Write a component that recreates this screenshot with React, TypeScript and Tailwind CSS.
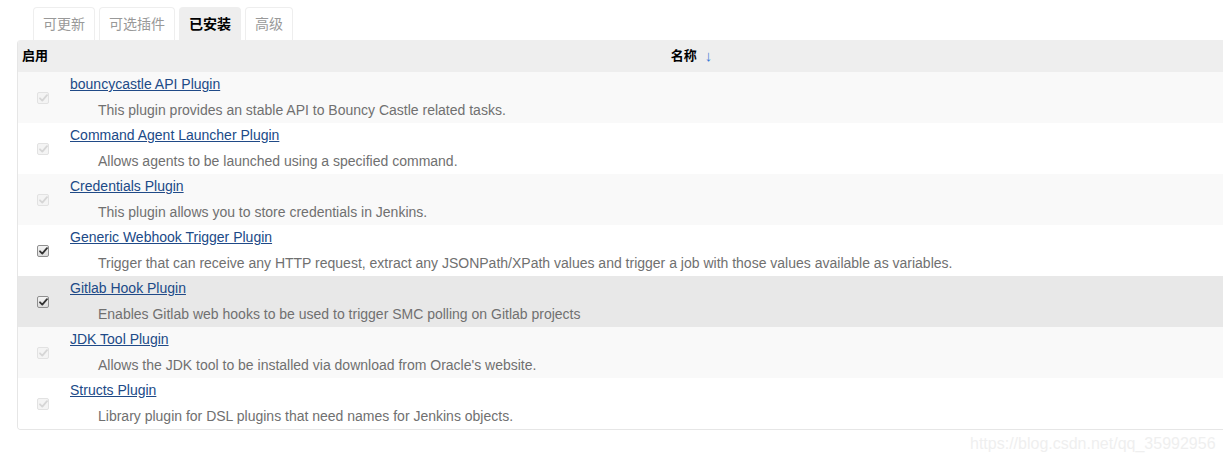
import React from 'react';

interface Plugin {
  name: string;
  desc: string;
  enabled: boolean;
}

const plugins: Plugin[] = [
  { name: 'bouncycastle API Plugin', desc: 'This plugin provides an stable API to Bouncy Castle related tasks.', enabled: false },
  { name: 'Command Agent Launcher Plugin', desc: 'Allows agents to be launched using a specified command.', enabled: false },
  { name: 'Credentials Plugin', desc: 'This plugin allows you to store credentials in Jenkins.', enabled: false },
  { name: 'Generic Webhook Trigger Plugin', desc: 'Trigger that can receive any HTTP request, extract any JSONPath/XPath values and trigger a job with those values available as variables.', enabled: true },
  { name: 'Gitlab Hook Plugin', desc: 'Enables Gitlab web hooks to be used to trigger SMC polling on Gitlab projects', enabled: true },
  { name: 'JDK Tool Plugin', desc: "Allows the JDK tool to be installed via download from Oracle's website.", enabled: false },
  { name: 'Structs Plugin', desc: 'Library plugin for DSL plugins that need names for Jenkins objects.', enabled: false },
];

// row backgrounds as they show (row 5 is under the mouse)
const rowBg = ['bg-[#f9f9f9]', 'bg-white', 'bg-[#f9f9f9]', 'bg-white', 'bg-[#e8e8e8]', 'bg-[#f9f9f9]', 'bg-white'];

const tabs = [
  { label: '可更新', active: false },
  { label: '可选插件', active: false },
  { label: '已安装', active: true },
  { label: '高级', active: false },
];

// little checkbox like the old windows one
const Check: React.FC<{ on: boolean }> = ({ on }) => (
  <span
    className={`flex h-[12px] w-[12px] items-center justify-center rounded-[2px] border ${
      on ? 'border-[#8f8f8f] bg-gradient-to-b from-[#f4f4f4] to-[#dcdcdc]' : 'border-[#e2e2e2] bg-[#f4f4f4]'
    }`}
  >
    <svg width="9" height="8" viewBox="0 0 9 8">
      <path
        d="M1 4.3 L3.3 6.6 L8 1.2"
        fill="none"
        stroke={on ? '#333' : '#d6d6d6'}
        strokeWidth="1.8"
        strokeLinecap="round"
        strokeLinejoin="round"
      />
    </svg>
  </span>
);

const App: React.FC = () => {
  return (
    <div
      className="relative h-[461px] w-[1223px] overflow-hidden bg-white"
      style={{ fontFamily: '"Liberation Sans", "Noto Sans CJK SC", Arial, sans-serif' }}
    >
      {/* Tabs */}
      <div className="ml-[33px] mt-[7px] flex gap-[4px]">
        {tabs.map((t) => (
          <div
            key={t.label}
            className={`flex h-[33px] items-center rounded-t-[4px] border border-b-0 px-[9px] text-[14px] ${
              t.active ? 'border-[#eeeeee] bg-[#eeeeee] font-bold text-black' : 'border-[#eeeeee] bg-white text-[#999999]'
            }`}
          >
            {t.label}
          </div>
        ))}
      </div>

      {/* Table */}
      <div className="ml-[17px] w-[1320px] overflow-hidden rounded-[4px] border border-t-0 border-[#e6e6e6]">
        <div className="flex h-[32px] items-center bg-[#eeeeee] text-[13px] font-bold text-black">
          <div className="w-[49px] pl-[4px]">启用</div>
          <div className="flex flex-1 items-center justify-center gap-[8px] pr-[20px]">
            <span>名称</span>
            <span className="text-[15px] font-normal text-[#3a7bd5]">↓</span>
          </div>
        </div>
        {plugins.map((p, i) => (
          <div key={p.name} className={`flex h-[51px] ${rowBg[i]}`}>
            <div className="flex w-[49px] items-center justify-center pl-[1px]">
              <Check on={p.enabled} />
            </div>
            <div className="flex-1 pl-[3px] pt-[2px] text-[14px]">
              <div className="h-[20px] leading-[20px]">
                <a href="#" className="text-[#204a87] underline">
                  {p.name}
                </a>
              </div>
              <div className="mt-[6px] pl-[28px] leading-[20px] text-[#707070]">{p.desc}</div>
            </div>
          </div>
        ))}
      </div>

      {/* watermark */}
      <div className="absolute left-[970px] top-[432px] text-[16px] text-[#efefef]">
        https://blog.csdn.net/qq_35992956
      </div>
    </div>
  );
};

export default App;
